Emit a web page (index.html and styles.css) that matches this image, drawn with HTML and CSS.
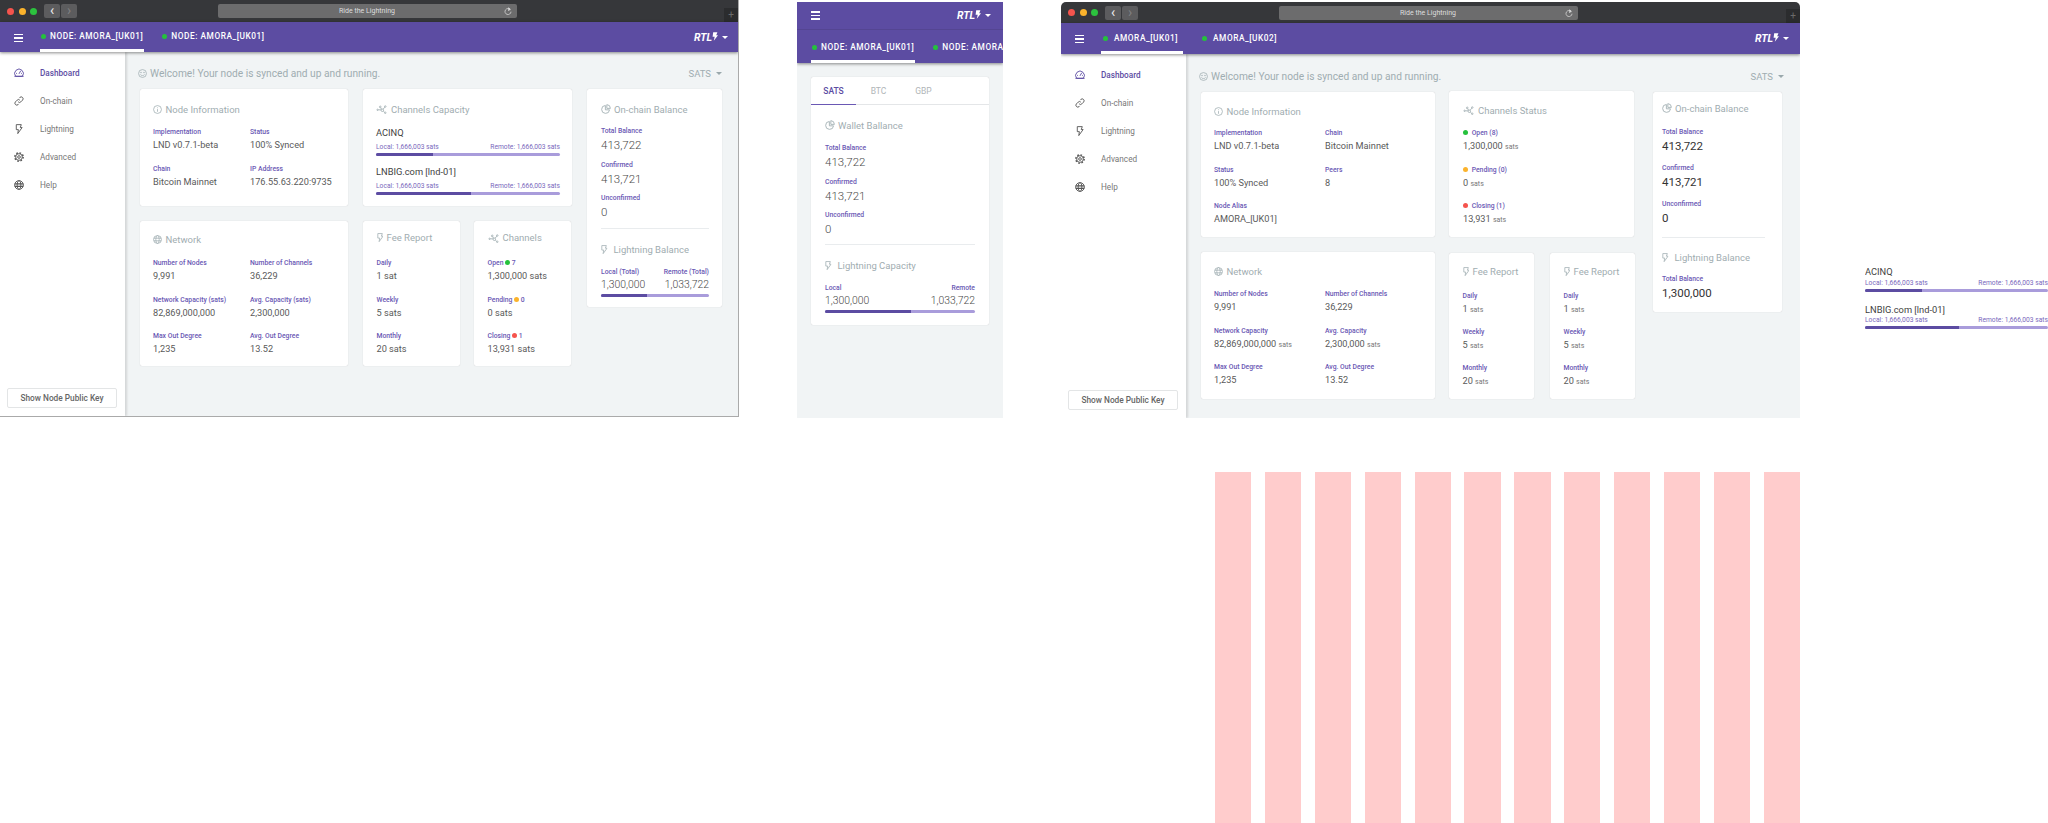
FILE: index.html
```html
<!DOCTYPE html>
<html lang="en">
<head>
  <meta charset="UTF-8">
  <title>Ride the Lightning</title>
  <link rel="stylesheet" href="styles.css">
</head>
<body>
  <svg class="sprite" xmlns="http://www.w3.org/2000/svg">
    <symbol id="i-smile" viewBox="0 0 24 24"><circle cx="12" cy="12" r="10.5"/><circle cx="8" cy="9.5" r="1"/><circle cx="16" cy="9.5" r="1"/><path d="M6.5 14.5c1.5 4 9.5 4 11 0"/></symbol>
    <symbol id="i-info" viewBox="0 0 24 24"><circle cx="12" cy="12" r="10.5"/><path d="M12 11v7M12 6.5v2"/></symbol>
    <symbol id="i-net" viewBox="0 0 24 24"><circle cx="2.5" cy="14" r="1.6"/><circle cx="9" cy="7" r="2"/><circle cx="14" cy="15" r="3"/><circle cx="21" cy="6" r="1.8"/><circle cx="21" cy="21" r="1.8"/><path d="M4 14h7M10 9l2.500 3.500M16 12.500l3.800-5M16.300 17l3.300 3"/></symbol>
    <symbol id="i-pie" viewBox="0 0 24 24"><path d="M10.500 3.500a9.500 9.500 0 1 0 10 10.500h-10z"/><path d="M14 1.500a9 9 0 0 1 8.500 9H14z"/></symbol>
    <symbol id="i-bolt" viewBox="4 0 17 24"><path d="M6 1.500h12l-2.500 7H20L9.500 23l1.500-9.500H6z"/></symbol>
    <symbol id="i-globe" viewBox="0 0 24 24"><circle cx="12" cy="12" r="10.500"/><ellipse cx="12" cy="12" rx="4.500" ry="10.500"/><path d="M2 8.500h20M2 15.500h20"/></symbol>
    <symbol id="i-gauge" viewBox="0 0 24 24"><path d="M4 20a10.500 10.500 0 1 1 16 0z"/><path d="M12 14l4-7M5 13h2M17 13h2M1 20h22"/></symbol>
    <symbol id="i-link" viewBox="0 0 24 24"><path d="M10 14a4.500 4.500 0 0 0 6.500 0l4-4a4.500 4.500 0 0 0-6.500-6.500l-1.500 1.500"/><path d="M14 10a4.500 4.500 0 0 0-6.500 0l-4 4A4.500 4.500 0 0 0 10 20.500l1.500-1.500"/></symbol>
    <symbol id="i-gear" viewBox="0 0 24 24"><circle cx="12" cy="12" r="8"/><circle cx="12" cy="12" r="10" stroke-width="3.500" stroke-dasharray="3.900 3.950"/><circle cx="12" cy="12" r="3.200"/></symbol>
    <symbol id="i-help" viewBox="0 0 24 24"><circle cx="12" cy="12" r="10.500"/><ellipse cx="12" cy="12" rx="4.500" ry="10.500"/><path d="M2 9h20M2 15h20" stroke-width="3"/></symbol>
    <symbol id="i-reload" viewBox="0 0 24 24"><path d="M19 8a9 9 0 1 0 2 6"/><path d="M13 2l6 5-6 4" fill="currentColor"/></symbol>
  </svg>

  <!-- desktop dashboard, first version -->
  <section class="board board-a">
    <div class="chrome">
      <div class="lights"><span class="light red"></span><span class="light amber"></span><span class="light green"></span></div>
      <div class="nav-btns"><span class="nav-btn">&#8249;</span><span class="nav-btn off">&#8250;</span></div>
      <div class="url"><span class="url-text">Ride the Lightning</span><svg class="reload"><use href="#i-reload"/></svg></div>
      <span class="plus">+</span>
    </div>
    <header class="topbar">
      <div class="burger"><span></span><span></span><span></span></div>
      <div class="tabs">
        <div class="tab active"><span class="dot on"></span>NODE: AMORA_[UK01]</div>
        <div class="tab"><span class="dot on"></span>NODE: AMORA_[UK01]</div>
      </div>
      <div class="brand">RTL<svg class="brand-bolt" viewBox="0 0 10 14"><path d="M2 0h7L7 5h3L3 14l1.500-6.500H1z"/></svg><span class="caret"></span></div>
    </header>
    <div class="layout">
      <aside class="sidebar">
        <a class="side-item current"><svg class="side-icon"><use href="#i-gauge"/></svg>Dashboard</a>
        <a class="side-item"><svg class="side-icon"><use href="#i-link"/></svg>On-chain</a>
        <a class="side-item"><svg class="side-icon"><use href="#i-bolt"/></svg>Lightning</a>
        <a class="side-item"><svg class="side-icon"><use href="#i-gear"/></svg>Advanced</a>
        <a class="side-item"><svg class="side-icon"><use href="#i-help"/></svg>Help</a>
        <button class="key-btn">Show Node Public Key</button>
      </aside>
      <main class="main">
        <div class="welcome">
          <svg class="title-icon"><use href="#i-smile"/></svg>
          <span>Welcome! Your node is synced and up and running.</span>
          <span class="unit-select">SATS<span class="caret grey"></span></span>
        </div>
        <div class="cards">
          <div class="card node-card">
            <h3 class="card-title"><svg class="title-icon"><use href="#i-info"/></svg>Node Information</h3>
            <div class="fields two">
              <div class="field"><div class="label">Implementation</div><div class="value">LND v0.7.1-beta</div></div>
              <div class="field"><div class="label">Status</div><div class="value">100% Synced</div></div>
              <div class="field"><div class="label">Chain</div><div class="value">Bitcoin Mainnet</div></div>
              <div class="field"><div class="label">IP Address</div><div class="value">176.55.63.220:9735</div></div>
            </div>
          </div>
          <div class="card cap-card">
            <h3 class="card-title"><svg class="title-icon net"><use href="#i-net"/></svg>Channels Capacity</h3>
            <div class="caps">
              <div class="cap">
                <div class="cap-name">ACINQ</div>
                <div class="cap-meta"><span>Local: 1,666,003 sats</span><span>Remote: 1,666,003 sats</span></div>
                <div class="bar"><div class="bar-fill" style="width:31%"></div></div>
              </div>
              <div class="cap">
                <div class="cap-name">LNBIG.com [lnd-01]</div>
                <div class="cap-meta"><span>Local: 1,666,003 sats</span><span>Remote: 1,666,003 sats</span></div>
                <div class="bar"><div class="bar-fill" style="width:51.500%"></div></div>
              </div>
            </div>
          </div>
          <div class="card balance-card">
            <h3 class="card-title"><svg class="title-icon pie"><use href="#i-pie"/></svg>On-chain Balance</h3>
            <div class="stack">
              <div class="field"><div class="label">Total Balance</div><div class="amount">413,722</div></div>
              <div class="field"><div class="label">Confirmed</div><div class="amount">413,721</div></div>
              <div class="field"><div class="label">Unconfirmed</div><div class="amount">0</div></div>
            </div>
            <hr class="rule">
            <h3 class="card-title"><svg class="title-icon slim"><use href="#i-bolt"/></svg>Lightning Balance</h3>
            <div class="split-labels"><span class="label">Local (Total)</span><span class="label">Remote (Total)</span></div>
            <div class="split-values"><span>1,300,000</span><span>1,033,722</span></div>
            <div class="bar"><div class="bar-fill" style="width:43%"></div></div>
          </div>
          <div class="card low network-card">
            <h3 class="card-title"><svg class="title-icon"><use href="#i-globe"/></svg>Network</h3>
            <div class="fields two">
              <div class="field"><div class="label">Number of Nodes</div><div class="value">9,991</div></div>
              <div class="field"><div class="label">Number of Channels</div><div class="value">36,229</div></div>
              <div class="field"><div class="label">Network Capacity (sats)</div><div class="value">82,869,000,000</div></div>
              <div class="field"><div class="label">Avg. Capacity (sats)</div><div class="value">2,300,000</div></div>
              <div class="field"><div class="label">Max Out Degree</div><div class="value">1,235</div></div>
              <div class="field"><div class="label">Avg. Out Degree</div><div class="value">13.52</div></div>
            </div>
          </div>
          <div class="pair">
            <div class="card low small-card">
              <h3 class="card-title"><svg class="title-icon slim"><use href="#i-bolt"/></svg>Fee Report</h3>
              <div class="fields">
                <div class="field"><div class="label">Daily</div><div class="value">1 sat</div></div>
                <div class="field"><div class="label">Weekly</div><div class="value">5 sats</div></div>
                <div class="field"><div class="label">Monthly</div><div class="value">20 sats</div></div>
              </div>
            </div>
            <div class="card low small-card">
              <h3 class="card-title"><svg class="title-icon net"><use href="#i-net"/></svg>Channels</h3>
              <div class="fields">
                <div class="field"><div class="label">Open <span class="dot on"></span> 7</div><div class="value">1,300,000 sats</div></div>
                <div class="field"><div class="label">Pending <span class="dot wait"></span> 0</div><div class="value">0 sats</div></div>
                <div class="field"><div class="label">Closing <span class="dot bad"></span> 1</div><div class="value">13,931 sats</div></div>
              </div>
            </div>
          </div>
        </div>
      </main>
    </div>
  </section>

  <!-- mobile view -->
  <section class="board board-b">
    <header class="topbar tall">
      <div class="bar-row">
        <div class="burger"><span></span><span></span><span></span></div>
        <div class="brand">RTL<svg class="brand-bolt" viewBox="0 0 10 14"><path d="M2 0h7L7 5h3L3 14l1.500-6.500H1z"/></svg><span class="caret"></span></div>
      </div>
      <div class="tabs">
        <div class="tab active"><span class="dot on"></span>NODE: AMORA_[UK01]</div>
        <div class="tab"><span class="dot on"></span>NODE: AMORA_[UK01]</div>
      </div>
    </header>
    <div class="mobile-body">
      <div class="card wallet-card">
        <div class="wallet-tabs">
          <span class="wallet-tab current">SATS</span>
          <span class="wallet-tab">BTC</span>
          <span class="wallet-tab">GBP</span>
        </div>
        <div class="wallet-inner">
          <h3 class="card-title"><svg class="title-icon pie"><use href="#i-pie"/></svg>Wallet Ballance</h3>
          <div class="stack">
            <div class="field"><div class="label">Total Balance</div><div class="amount">413,722</div></div>
            <div class="field"><div class="label">Confirmed</div><div class="amount">413,721</div></div>
            <div class="field"><div class="label">Unconfirmed</div><div class="amount">0</div></div>
          </div>
          <hr class="rule">
          <h3 class="card-title"><svg class="title-icon slim"><use href="#i-bolt"/></svg>Lightning Capacity</h3>
          <div class="split-labels"><span class="label">Local</span><span class="label">Remote</span></div>
          <div class="split-values"><span>1,300,000</span><span>1,033,722</span></div>
          <div class="bar"><div class="bar-fill" style="width:57%"></div></div>
        </div>
      </div>
    </div>
  </section>

  <!-- desktop dashboard, second version -->
  <section class="board board-c">
    <div class="chrome">
      <div class="lights"><span class="light red"></span><span class="light amber"></span><span class="light green"></span></div>
      <div class="nav-btns"><span class="nav-btn">&#8249;</span><span class="nav-btn off">&#8250;</span></div>
      <div class="url"><span class="url-text">Ride the Lightning</span><svg class="reload"><use href="#i-reload"/></svg></div>
      <span class="plus">+</span>
    </div>
    <header class="topbar">
      <div class="burger"><span></span><span></span><span></span></div>
      <div class="tabs">
        <div class="tab active"><span class="dot on"></span>AMORA_[UK01]</div>
        <div class="tab"><span class="dot on"></span>AMORA_[UK02]</div>
      </div>
      <div class="brand">RTL<svg class="brand-bolt" viewBox="0 0 10 14"><path d="M2 0h7L7 5h3L3 14l1.500-6.500H1z"/></svg><span class="caret"></span></div>
    </header>
    <div class="layout">
      <aside class="sidebar">
        <a class="side-item current"><svg class="side-icon"><use href="#i-gauge"/></svg>Dashboard</a>
        <a class="side-item"><svg class="side-icon"><use href="#i-link"/></svg>On-chain</a>
        <a class="side-item"><svg class="side-icon"><use href="#i-bolt"/></svg>Lightning</a>
        <a class="side-item"><svg class="side-icon"><use href="#i-gear"/></svg>Advanced</a>
        <a class="side-item"><svg class="side-icon"><use href="#i-help"/></svg>Help</a>
        <button class="key-btn">Show Node Public Key</button>
      </aside>
      <main class="main">
        <div class="welcome">
          <svg class="title-icon"><use href="#i-smile"/></svg>
          <span>Welcome! Your node is synced and up and running.</span>
          <span class="unit-select">SATS<span class="caret grey"></span></span>
        </div>
        <div class="cards">
          <div class="card node-card">
            <h3 class="card-title"><svg class="title-icon"><use href="#i-info"/></svg>Node Information</h3>
            <div class="fields two">
              <div class="field"><div class="label">Implementation</div><div class="value">LND v0.7.1-beta</div></div>
              <div class="field"><div class="label">Chain</div><div class="value">Bitcoin Mainnet</div></div>
              <div class="field"><div class="label">Status</div><div class="value">100% Synced</div></div>
              <div class="field"><div class="label">Peers</div><div class="value">8</div></div>
              <div class="field"><div class="label">Node Alias</div><div class="value">AMORA_[UK01]</div></div>
            </div>
          </div>
          <div class="card status-card">
            <h3 class="card-title"><svg class="title-icon net"><use href="#i-net"/></svg>Channels Status</h3>
            <div class="fields">
              <div class="field"><div class="label"><span class="dot on"></span> Open (8)</div><div class="value">1,300,000 <span class="unit">sats</span></div></div>
              <div class="field"><div class="label"><span class="dot wait"></span> Pending (0)</div><div class="value">0 <span class="unit">sats</span></div></div>
              <div class="field"><div class="label"><span class="dot bad"></span> Closing (1)</div><div class="value">13,931 <span class="unit">sats</span></div></div>
            </div>
          </div>
          <div class="card balance-card">
            <h3 class="card-title"><svg class="title-icon pie"><use href="#i-pie"/></svg>On-chain Balance</h3>
            <div class="stack">
              <div class="field"><div class="label">Total Balance</div><div class="amount">413,722</div></div>
              <div class="field"><div class="label">Confirmed</div><div class="amount">413,721</div></div>
              <div class="field"><div class="label">Unconfirmed</div><div class="amount">0</div></div>
            </div>
            <hr class="rule">
            <h3 class="card-title"><svg class="title-icon slim"><use href="#i-bolt"/></svg>Lightning Balance</h3>
            <div class="stack">
              <div class="field"><div class="label">Total Balance</div><div class="amount">1,300,000</div></div>
            </div>
          </div>
          <div class="card low network-card">
            <h3 class="card-title"><svg class="title-icon"><use href="#i-globe"/></svg>Network</h3>
            <div class="fields two">
              <div class="field"><div class="label">Number of Nodes</div><div class="value">9,991</div></div>
              <div class="field"><div class="label">Number of Channels</div><div class="value">36,229</div></div>
              <div class="field"><div class="label">Network Capacity</div><div class="value">82,869,000,000 <span class="unit">sats</span></div></div>
              <div class="field"><div class="label">Avg. Capacity</div><div class="value">2,300,000 <span class="unit">sats</span></div></div>
              <div class="field"><div class="label">Max Out Degree</div><div class="value">1,235</div></div>
              <div class="field"><div class="label">Avg. Out Degree</div><div class="value">13.52</div></div>
            </div>
          </div>
          <div class="pair">
            <div class="card low small-card">
              <h3 class="card-title"><svg class="title-icon slim"><use href="#i-bolt"/></svg>Fee Report</h3>
              <div class="fields">
                <div class="field"><div class="label">Daily</div><div class="value">1 <span class="unit">sats</span></div></div>
                <div class="field"><div class="label">Weekly</div><div class="value">5 <span class="unit">sats</span></div></div>
                <div class="field"><div class="label">Monthly</div><div class="value">20 <span class="unit">sats</span></div></div>
              </div>
            </div>
            <div class="card low small-card">
              <h3 class="card-title"><svg class="title-icon slim"><use href="#i-bolt"/></svg>Fee Report</h3>
              <div class="fields">
                <div class="field"><div class="label">Daily</div><div class="value">1 <span class="unit">sats</span></div></div>
                <div class="field"><div class="label">Weekly</div><div class="value">5 <span class="unit">sats</span></div></div>
                <div class="field"><div class="label">Monthly</div><div class="value">20 <span class="unit">sats</span></div></div>
              </div>
            </div>
          </div>
        </div>
      </main>
    </div>
  </section>

  <!-- loose capacity rows -->
  <section class="board board-d">
    <div class="caps">
      <div class="cap">
        <div class="cap-name">ACINQ</div>
        <div class="cap-meta"><span>Local: 1,666,003 sats</span><span>Remote: 1,666,003 sats</span></div>
        <div class="bar"><div class="bar-fill" style="width:31%"></div></div>
      </div>
      <div class="cap">
        <div class="cap-name">LNBIG.com [lnd-01]</div>
        <div class="cap-meta"><span>Local: 1,666,003 sats</span><span>Remote: 1,666,003 sats</span></div>
        <div class="bar"><div class="bar-fill" style="width:51.500%"></div></div>
      </div>
    </div>
  </section>

  <!-- column grid overlay -->
  <section class="board board-grid">
    <span></span><span></span><span></span><span></span><span></span><span></span>
    <span></span><span></span><span></span><span></span><span></span><span></span>
  </section>
</body>
</html>
```

FILE: styles.css
```css
html, body {
  margin: 0;
  padding: 0;
  background: white;
}

body {
  position: relative;
  width: 2048px;
  height: 823px;
  overflow: hidden;
  font-family: Roboto, sans-serif;
  color: #4a4a4a;
}

.sprite {
  display: none;
}

svg use {
  fill: none;
  stroke: currentColor;
  stroke-width: 2.2;
}

/* Artboards on the canvas */
.board {
  position: absolute;
  box-sizing: border-box;
  display: flex;
  flex-direction: column;
  overflow: hidden;
  background: #f1f4f5;
}

.board-a {
  left: 0;
  top: 0;
  width: 739px;
  height: 417px;
  border-right: 1px solid #aaa;
  border-bottom: 1px solid #aaa;
}

.board-b {
  left: 797px;
  top: 2px;
  width: 206px;
  height: 416px;
}

.board-c {
  left: 1061px;
  top: 2px;
  width: 739px;
  height: 416px;
  border-radius: 5px 5px 0 0;
}

.board-d {
  left: 1865px;
  top: 267px;
  width: 183px;
  height: 64px;
  background: white;
}

.board-grid {
  left: 1215px;
  top: 472px;
  width: 585px;
  height: 351px;
  display: grid;
  grid-template-columns: repeat(12, 1fr);
  column-gap: 13.67px;
  background: none;
}

.board-grid span {
  background: #ffcccc;
}

/* Browser chrome */
.chrome {
  display: flex;
  align-items: center;
  height: 22px;
  flex: none;
  padding-left: 7px;
  background: #36373a;
}

.board-c .chrome {
  height: 21px;
}

.lights {
  display: flex;
  gap: 4.500px;
}

.light {
  width: 7px;
  height: 7px;
  border-radius: 50%;
}

.light.red { background: #f5544d; }
.light.amber { background: #fbb32c; }
.light.green { background: #2cc23e; }

.nav-btns {
  display: flex;
  gap: 1px;
  margin-left: 7px;
}

.nav-btn {
  width: 16px;
  height: 14px;
  border-radius: 2px;
  background: #5c5c5e;
  color: #eee;
  font-size: 14px;
  line-height: 12px;
  text-align: center;
}

.nav-btn.off {
  color: #808082;
}

.url {
  display: flex;
  align-items: center;
  width: 299px;
  height: 14px;
  margin-left: 141px;
  border-radius: 2px;
  background: #6c6c6d;
  color: #dedede;
  font-size: 7px;
}

.url-text {
  flex: 1;
  padding-left: 12px;
  text-align: center;
}

.reload {
  width: 8px;
  height: 8px;
  margin-right: 5px;
  color: #ddd;
}

.plus {
  align-self: flex-end;
  width: 14px;
  height: 14px;
  margin-left: auto;
  background: #2b2c2e;
  color: #6a6a6a;
  font-size: 10px;
  line-height: 14px;
  text-align: center;
}

/* Purple top bar */
.topbar {
  position: relative;
  z-index: 2;
  display: flex;
  align-items: flex-start;
  flex: none;
  box-sizing: border-box;
  height: 30px;
  padding: 0 10px 0 14px;
  background: #5c4ca2;
  box-shadow: 0 1px 3px rgba(0, 0, 0, 0.45);
  color: white;
}

.board-c .topbar {
  height: 31px;
  padding-right: 11px;
}

.topbar.tall {
  display: block;
  height: 61px;
  padding: 0 12px 0 14px;
}

.bar-row {
  display: flex;
  align-items: center;
  height: 27px;
  margin: 0 -12px 0 -14px;
  padding: 0 12px 0 14px;
  border-bottom: 1px solid #544592;
}

.burger {
  display: flex;
  flex-direction: column;
  gap: 2px;
  width: 9px;
  margin: 11.500px 17px 0 0;
}

.bar-row .burger {
  margin: 0;
}

.burger span {
  height: 1.500px;
  background: white;
}

.tabs {
  display: flex;
  gap: 17px;
  white-space: nowrap;
}

.tab {
  display: flex;
  align-items: center;
  gap: 4px;
  box-sizing: border-box;
  height: 30px;
  padding: 1.500px 1px 0;
  border-bottom: 3px solid transparent;
  font-size: 8.300px;
  font-weight: 500;
  letter-spacing: 0.55px;
}

.tab.active {
  border-bottom-color: white;
}

.board-c .tab {
  height: 31px;
  gap: 6px;
  padding: 2px 5px 0 2px;
}

.topbar.tall .tabs {
  margin-top: 3px;
}

.topbar.tall .tab {
  height: 30px;
}

.dot {
  display: inline-block;
  width: 5px;
  height: 5px;
  border-radius: 50%;
  vertical-align: 0;
}

.dot.on { background: #25c13c; }
.dot.wait { background: #fbb32c; }
.dot.bad { background: #f5544d; }

.brand {
  display: flex;
  align-items: center;
  height: 30px;
  margin-left: auto;
  font-size: 10.500px;
  font-style: italic;
  font-weight: 700;
}

.bar-row .brand {
  height: 27px;
}

.brand-bolt {
  width: 6px;
  height: 9px;
  margin: -2px 0 0 0;
  fill: white;
}

.caret {
  width: 0;
  height: 0;
  margin-left: 4px;
  border-left: 3px solid transparent;
  border-right: 3px solid transparent;
  border-top: 3px solid white;
}

.caret.grey {
  display: inline-block;
  margin-left: 5px;
  vertical-align: 2px;
  border-top-color: #9aa8ac;
}

/* Sidebar */
.layout {
  display: flex;
  flex: 1;
  min-height: 0;
}

.sidebar {
  position: relative;
  z-index: 1;
  display: flex;
  flex-direction: column;
  flex: none;
  box-sizing: border-box;
  width: 125px;
  padding: 6.500px 0 8px;
  background: white;
  box-shadow: 2px 0 2px rgba(0, 0, 0, 0.12);
}

.side-item {
  display: flex;
  align-items: center;
  height: 28px;
  padding-left: 14px;
  color: #777;
  font-size: 8.200px;
}

.side-item.current {
  color: #5c4ca2;
  font-weight: 500;
}

.side-icon {
  width: 10px;
  height: 10px;
  margin-right: 16px;
  color: #555;
}

.current .side-icon {
  color: #5c4ca2;
}

.key-btn {
  width: 110px;
  height: 20px;
  margin: auto 0 0 7px;
  padding: 0;
  border: 1px solid #e3e5e6;
  border-radius: 2px;
  background: white;
  color: #666;
  font-family: inherit;
  font-size: 8.300px;
  font-weight: 500;
}

/* Main area */
.main {
  flex: 1;
  padding: 14px 0 0 15px;
}

.board-c .main {
  padding-top: 15px;
}

.welcome {
  display: flex;
  align-items: center;
  height: 14px;
  margin-bottom: 9px;
  padding-right: 16px;
  color: #9fadb1;
  font-size: 10.200px;
}

.welcome .title-icon {
  margin: 0 3px 0 -2px;
}

.unit-select {
  margin-left: auto;
  font-size: 9.500px;
}

.cards {
  display: grid;
  grid-template-columns: 208px 209px 135px;
  grid-template-rows: 117px 145px;
  column-gap: 15px;
  row-gap: 15px;
}

.board-c .cards {
  grid-template-columns: 234px 185px 134px;
  grid-template-rows: 145px 147px;
  column-gap: 14px;
}

.card {
  box-sizing: border-box;
  padding: 13px 12px 0 13px;
  border-radius: 2px;
  background: white;
  box-shadow: 0 0 1px rgba(0, 0, 0, 0.22);
}

.card.low {
  padding-top: 11px;
}

.balance-card {
  grid-column: 3;
  grid-row: 1 / span 2;
  align-self: start;
  padding: 13px 13px 10px 14px;
}

.network-card {
  grid-column: 1;
  grid-row: 2;
}

.pair {
  display: grid;
  grid-template-columns: 97px 97px;
  column-gap: 14px;
  grid-column: 2;
  grid-row: 2;
}

.card.small-card {
  padding: 9.500px 4px 0 13.500px;
}

.board-c .pair {
  grid-template-columns: 85px 85px;
  column-gap: 16px;
}

.board-c .card {
  padding-top: 12px;
}

.board-c .card.small-card {
  padding-top: 11px;
  margin-top: 1px;
}

.board-c .status-card {
  margin-top: -1px;
  padding-left: 14px;
}

.board-c .card.balance-card {
  margin-left: 5px;
  padding: 9px 17px 10px 9px;
}

.card-title {
  display: flex;
  align-items: center;
  height: 14px;
  margin: 0;
  color: #9fadb1;
  font-size: 9.500px;
  font-weight: 400;
  white-space: nowrap;
}

.title-icon {
  flex: none;
  width: 9px;
  height: 9px;
  margin-right: 3.500px;
  color: #a5b2b6;
}

.title-icon.pie {
  width: 10px;
  height: 10px;
  margin-right: 3px;
}

.title-icon.net {
  width: 11px;
  height: 10px;
  margin-right: 4px;
}

.title-icon.slim {
  width: 6.500px;
  height: 9px;
  margin-right: 3.500px;
}

.balance-card .title-icon.slim,
.wallet-inner .title-icon.slim {
  margin-right: 6px;
}

/* Label and value pairs */
.fields {
  display: grid;
  row-gap: 10.500px;
  margin-top: 11px;
}

.fields.two {
  grid-template-columns: 97px 1fr;
}

.board-a .low .fields {
  margin-top: 12px;
}

.board-a .small-card .fields {
  margin-top: 13.500px;
}

.board-c .fields.two {
  grid-template-columns: 111px 1fr;
}

.board-c .node-card .fields {
  margin-top: 10px;
}

.board-c .small-card .fields {
  margin-top: 13px;
  row-gap: 10px;
}

.board-c .status-card .dot {
  margin-right: 2px;
}

.label {
  height: 10px;
  color: #6a58b4;
  font-size: 6.800px;
  font-weight: 500;
  line-height: 10px;
  white-space: nowrap;
}

.value {
  height: 16px;
  color: #5a5a5a;
  font-size: 9.200px;
  line-height: 16px;
  white-space: nowrap;
}

.unit {
  color: #777;
  font-size: 7px;
}

.stack {
  display: grid;
  row-gap: 5.500px;
  margin-top: 10px;
}

.wallet-inner .stack {
  margin-top: 11px;
}

.board-c .balance-card .stack {
  row-gap: 8px;
  margin-top: 12px;
}

.board-c .balance-card .rule ~ .stack {
  margin-top: 10px;
}

.amount {
  height: 18px;
  color: #4a4a4a;
  font-size: 11.500px;
  font-weight: 300;
  line-height: 18px;
}

.board-c .amount {
  color: #333;
  font-weight: 400;
}

.rule {
  height: 1px;
  margin: 7px 0 13px;
  border: 0;
  background: #e9ecee;
}

.wallet-inner .rule {
  margin-top: 6px;
}

.board-c .rule {
  margin: 10px 0 12px;
}

.split-labels,
.split-values,
.cap-meta {
  display: flex;
  justify-content: space-between;
}

.split-labels {
  margin-top: 11px;
}

.split-values {
  height: 15px;
  color: #4a4a4a;
  font-size: 10.400px;
  font-weight: 300;
  line-height: 15px;
}

/* Capacity rows */
.caps {
  display: grid;
  row-gap: 9px;
  margin-top: 10px;
}

.cap-name {
  height: 14px;
  color: #3f3f3f;
  font-size: 9.300px;
  line-height: 14px;
  white-space: nowrap;
}

.cap-meta {
  height: 10px;
  margin-top: 1.500px;
  color: #7a69bd;
  font-size: 6.700px;
  line-height: 10px;
  white-space: nowrap;
}

.bar {
  height: 3px;
  margin-top: 1.500px;
  border-radius: 2px;
  background: #a99cdb;
  overflow: hidden;
}

.bar-fill {
  height: 100%;
  background: #5c4ca2;
}

.board-d .caps {
  row-gap: 13px;
  margin-top: 0;
}

.board-d .cap-name {
  height: 10.500px;
  line-height: 10.500px;
}

.board-d .cap-meta {
  margin-top: 0;
}

.board-d .bar {
  margin-top: 1px;
}

/* Mobile view */
.mobile-body {
  padding: 14px 14px 0;
}

.wallet-card {
  height: 248px;
  padding: 0;
}

.wallet-tabs {
  display: flex;
  height: 27px;
  border-bottom: 1px solid #e4e6e8;
}

.wallet-tab {
  width: 45px;
  padding-top: 9px;
  color: #b0b5b7;
  font-size: 8.500px;
  line-height: 10px;
  text-align: center;
}

.wallet-tab.current {
  box-sizing: border-box;
  height: 28px;
  border-bottom: 1.500px solid #6a58b4;
  color: #5c4ca2;
  font-weight: 500;
}

.wallet-inner {
  padding: 13px 14px 0;
}
```
